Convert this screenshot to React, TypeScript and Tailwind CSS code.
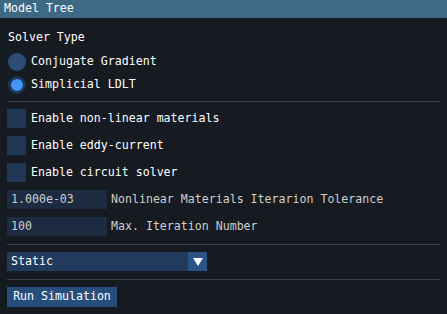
const font = { fontFamily: '"DejaVu Sans Mono", "Liberation Mono", monospace' };

function Radio({ label, checked }: { label: string; checked?: boolean }) {
  return (
    <div className="flex items-center h-[19px] gap-[5px] pl-[8px]">
      <div className={`w-[18px] h-[18px] rounded-full flex items-center justify-center ${checked ? 'bg-[#203553]' : 'bg-[#2c4c77]'}`}>
        {checked && <div className="w-[12px] h-[12px] rounded-full bg-[#4296fa]" />}
      </div>
      <span className="text-white">{label}</span>
    </div>
  );
}

function Check({ label }: { label: string }) {
  return (
    <div className="flex items-center h-[19px] gap-[5px] pl-[7px]">
      <div className="w-[19px] h-[19px] bg-[#213555]" />
      <span className="text-white">{label}</span>
    </div>
  );
}

function InputRow({ value, label }: { value: string; label: string }) {
  return (
    <div className="flex items-center h-[19px] gap-[4px] pl-[7px]">
      <div className="w-[100px] h-[19px] bg-[#1c2b3f] pl-[4px] flex items-center text-[#cfcfcf]">{value}</div>
      <span className="text-[#cfcfcf]">{label}</span>
    </div>
  );
}

const Sep = ({ mt }: { mt: string }) => <div className={`${mt} ml-[7px] mr-[7px] h-px bg-[#3b3d48]`} />;

export default function App() {
  return (
    <div className="w-[447px] h-[314px] bg-[#161a21] text-[11.6px] leading-none overflow-hidden" style={font}>
      <div className="h-[18px] bg-[#3d6984] text-white flex items-center pl-[4px]">Model Tree</div>
      <div className="mt-[10px] h-[19px] flex items-center pl-[8px] text-white">Solver Type</div>
      <div className="mt-[5px]"><Radio label="Conjugate Gradient" /></div>
      <div className="mt-[4px]"><Radio label="Simplicial LDLT" checked /></div>
      <Sep mt="mt-[7px]" />
      <div className="mt-[7px]"><Check label="Enable non-linear materials" /></div>
      <div className="mt-[8px]"><Check label="Enable eddy-current" /></div>
      <div className="mt-[8px]"><Check label="Enable circuit solver" /></div>
      <div className="mt-[8px]"><InputRow value="1.000e-03" label="Nonlinear Materials Iterarion Tolerance" /></div>
      <div className="mt-[8px]"><InputRow value="100" label="Max. Iteration Number" /></div>
      <Sep mt="mt-[8px]" />
      <div className="mt-[7px] ml-[7px] w-[200px] h-[19px] flex bg-[#213a5d]">
        <div className="flex-1 flex items-center pl-[4px] text-white">Static</div>
        <div className="w-[19px] h-[19px] bg-[#2b5486] flex items-center justify-center">
          <svg width="10" height="8" viewBox="0 0 10 8"><polygon points="0,0 10,0 5,8" fill="#ffffff" /></svg>
        </div>
      </div>
      <Sep mt="mt-[8px]" />
      <div className="mt-[7px] ml-[7px] w-[110px] h-[20px] bg-[#264e7d] text-white flex items-center justify-center">Run Simulation</div>
    </div>
  );
}
